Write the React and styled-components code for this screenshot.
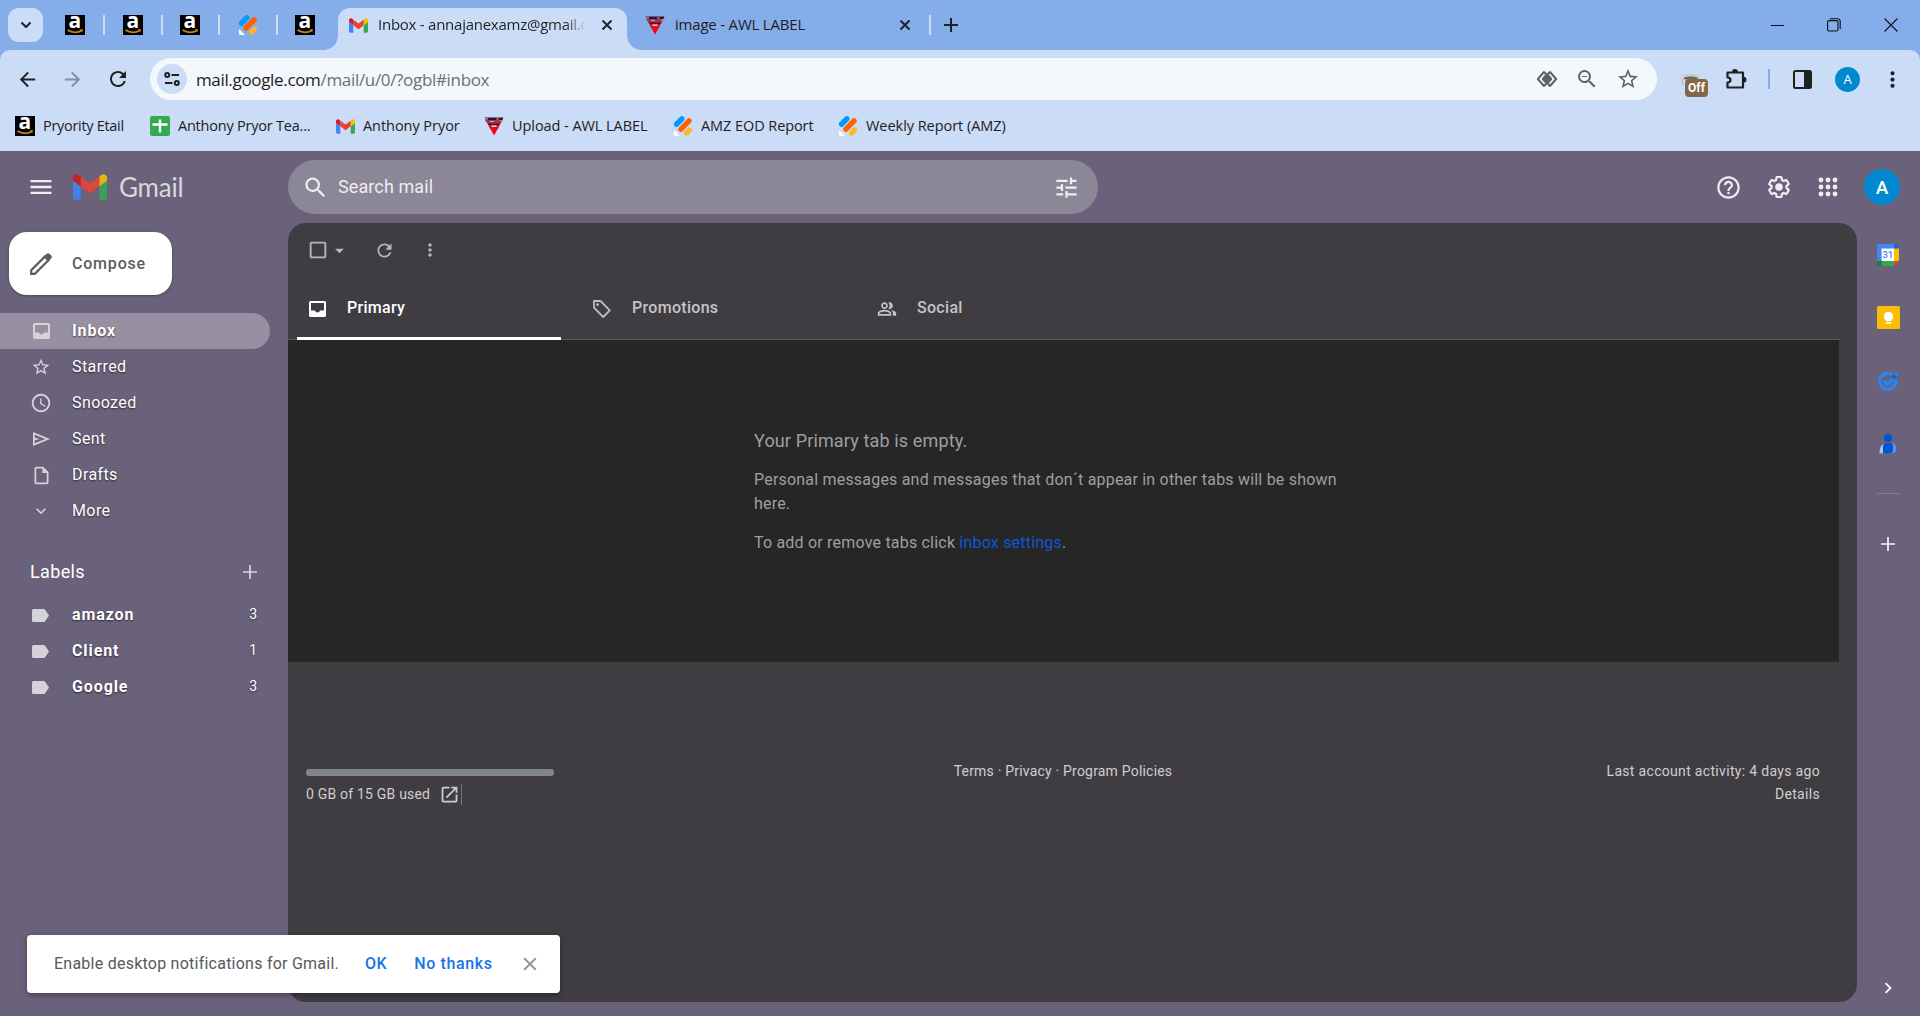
import React from "react";
import styled, { createGlobalStyle } from "styled-components";
import {
  MdAccessTime,
  MdArrowBack,
  MdArrowDropDown,
  MdArrowForward,
  MdCheckBoxOutlineBlank,
  MdChevronRight,
  MdClose,
  MdExpandMore,
  MdHelpOutline,
  MdMenu,
  MdMoreVert,
  MdOpenInNew,
  MdOutlineInsertDriveFile,
  MdOutlinePeopleAlt,
  MdOutlineZoomOut,
  MdRefresh,
  MdSearch,
  MdStarBorder,
  MdTune,
} from "react-icons/md";

const GlobalStyle = createGlobalStyle`
  * {
    box-sizing: border-box;
  }
  body {
    margin: 0;
    overflow: hidden;
    font-family: Roboto, "Liberation Sans", sans-serif;
  }
  p, h1, h2, h3 {
    margin: 0;
    font-weight: 400;
  }
  svg {
    display: block;
    flex-shrink: 0;
    overflow: visible;
  }
`;

/* ---------- logos and icons ---------- */

const AmazonIcon = () => (
  <svg width="20" height="20" viewBox="0 0 20 20">
    <rect width="20" height="20" fill="#000" />
    <text
      x="9.8"
      y="13.4"
      textAnchor="middle"
      fontFamily="Open Sans, sans-serif"
      fontWeight="700"
      fontSize="21"
      fill="#fff"
    >
      a
    </text>
    <path
      d="M2.500 15c4.500 3 10.500 3 14.500.2"
      fill="none"
      stroke="#c77f1b"
      strokeWidth="1.800"
    />
    <path d="M14.600 14.400l3.400-.4-.8 3.200z" fill="#c77f1b" />
  </svg>
);

const JotformIcon = () => (
  <svg width="20" height="20" viewBox="0 0 20 20">
    <path d="M1 14v4.600c0 .8.4 1.400 1.200 1.400H7z" fill="#fff" />
    <g strokeLinecap="round" strokeWidth="5.400" fill="none">
      <path d="M3.600 8.200l5.200-5.400" stroke="#0099ff" />
      <path d="M8 13.200l8-8.400" stroke="#ff6100" />
      <path d="M13.600 17l2.800-3" stroke="#ffb629" />
    </g>
  </svg>
);

const GmailIcon = ({ width, height, muted }) => (
  <svg
    width={width}
    height={height}
    viewBox="52 42 88 66"
    opacity={muted ? 0.9 : 1}
  >
    <path fill="#4285f4" d="M58 108h14V74L52 59v43c0 3.320 2.690 6 6 6" />
    <path fill="#34a853" d="M120 108h14c3.320 0 6-2.690 6-6V59l-20 15" />
    <path fill="#fbbc04" d="M120 48v26l20-15v-8c0-7.420-8.470-11.650-14.400-7.200" />
    <path fill="#ea4335" d="M72 74V48l24 18 24-18v26L96 92" />
    <path fill="#c5221f" d="M52 51v8l20 15V48l-5.600-4.200c-5.940-4.450-14.400-.220-14.400 7.200" />
  </svg>
);

const AwlIcon = () => (
  <svg width="20" height="20" viewBox="0 0 20 20">
    <path d="M.5 1.500h19L17.500 6h-15z" fill="#2a1238" />
    <path d="M1 4h18l-2 3H3z" fill="#8a3a6c" />
    <path d="M1 2.800h3M6 5.500h4M12 3h3M16 4.800h3" stroke="#f0a040" strokeWidth="1.200" />
    <path d="M3.200 7h13.600L14 12.500H6z" fill="#c4142c" />
    <path d="M4.200 8.300h11.600" stroke="#2a1238" strokeWidth="1" />
    <path d="M7.500 10.200h5" stroke="#fff" strokeWidth="1.200" />
    <path d="M5.500 11.500h9L10 19.500z" fill="#f5050f" />
  </svg>
);

const SheetsIcon = () => (
  <svg width="20" height="20" viewBox="0 0 20 20">
    <rect width="20" height="20" rx="2" fill="#34a853" />
    <path d="M10 3.500v13M2.500 8.500h15" stroke="#fff" strokeWidth="2.400" />
  </svg>
);

const SiteInfoIcon = () => (
  <svg width="18" height="18" viewBox="0 0 18 18">
    <g fill="none" stroke="#1f2023" strokeWidth="2">
      <circle cx="4.200" cy="5" r="2" />
      <path d="M8.500 5H16M2 13h7.500" />
      <circle cx="13.800" cy="13" r="2" />
    </g>
  </svg>
);

const DiamondsIcon = () => (
  <svg width="22" height="18" viewBox="0 0 22 18">
    <path d="M11 3.200L15.600 9 11 14.800 6.400 9z" fill="#5f6368" />
    <g fill="none" stroke="#5f6368" strokeWidth="2" strokeLinejoin="round">
      <path d="M8 2L1.800 9 8 16l2.600-2.600L6.800 9l3.800-4.600z" />
      <path d="M14 2l6.200 7L14 16l-2.600-2.600L15.200 9l-3.800-4.600z" />
    </g>
  </svg>
);

const CoffeeIcon = () => (
  <svg width="20" height="16" viewBox="0 0 20 16">
    <path d="M1.500 4l1.500 9h4l8-9z" fill="#dfe3e6" />
    <ellipse cx="10" cy="3.600" rx="9" ry="2.600" fill="#f5f5f2" stroke="#b3b5b3" />
    <ellipse cx="10.600" cy="4" rx="7.200" ry="1.700" fill="#6f6a5e" />
    <path d="M2.400 6l.8 6" stroke="#a9aca9" strokeWidth="1" />
  </svg>
);

const PuzzleIcon = () => (
  <svg width="22" height="22" viewBox="0 0 22 22">
    <path
      d="M2.500 4.500h15.500v15H2.500v-5c2-.3 3-1.300 3-2.600s-1-2.300-3-2.600z"
      fill="none"
      stroke="#1f2023"
      strokeWidth="2.200"
      strokeLinejoin="round"
    />
    <path d="M7 4a3 3 0 0 1 6 0zM18.500 8.800a3 3 0 0 1 0 6z" fill="#1f2023" />
  </svg>
);

const SidePanelIcon = () => (
  <svg width="19" height="19" viewBox="0 0 19 19">
    <rect x="1" y="1" width="17" height="17" rx="1.500" fill="none" stroke="#1f2023" strokeWidth="2" />
    <path d="M11 1h7v17h-7z" fill="#1f2023" />
  </svg>
);

const RestoreIcon = () => (
  <svg width="14" height="14" viewBox="0 0 14 14">
    <g fill="none" stroke="#0b0f18" strokeWidth="1.100">
      <rect x="0.600" y="2.600" width="10.400" height="10.400" rx="1.600" />
      <path d="M2.800.7h7.700a2.700 2.700 0 0 1 2.700 2.700v7.600" />
    </g>
  </svg>
);

const CloseWindowIcon = () => (
  <svg width="14" height="14" viewBox="0 0 14 14">
    <path d="M.5.5l13 13M13.500.5l-13 13" stroke="#0b0f18" strokeWidth="1.100" />
  </svg>
);

const CrossIcon = () => (
  <svg width="12" height="12" viewBox="0 0 12 12">
    <path d="M1.500 1.500l9 9M10.500 1.500l-9 9" stroke="#1f2023" strokeWidth="1.900" />
  </svg>
);

const PlusIcon = ({ size, stroke, color }) => (
  <svg width={size} height={size} viewBox="0 0 14 14">
    <path d="M7 0v14M0 7h14" stroke={color} strokeWidth={stroke} />
  </svg>
);

const GearIcon = () => (
  <svg width="26" height="26" viewBox="0 0 24 24" fill="#efedf1">
    <path d="M13.850 22.250h-3.700c-.74 0-1.360-.54-1.450-1.270l-.27-1.890c-.27-.14-.53-.29-.79-.46l-1.800.72c-.7.26-1.470-.03-1.810-.65L2.200 15.530c-.35-.66-.2-1.440.36-1.880l1.530-1.190c-.01-.15-.02-.3-.02-.46 0-.15.01-.31.02-.46l-1.520-1.190c-.59-.45-.74-1.260-.37-1.880l1.850-3.190c.34-.62 1.110-.9 1.790-.63l1.810.73c.26-.17.52-.32.78-.46l.27-1.910c.09-.7.71-1.250 1.440-1.250h3.700c.74 0 1.360.54 1.450 1.270l.27 1.890c.27.14.53.29.79.46l1.800-.72c.71-.26 1.480.03 1.820.65l1.840 3.180c.36.66.2 1.440-.36 1.880l-1.520 1.190c.01.15.02.3.02.46s-.01.31-.02.46l1.520 1.190c.56.45.72 1.230.37 1.860l-1.860 3.220c-.34.62-1.110.9-1.800.63l-1.800-.72c-.26.17-.52.32-.78.46l-.27 1.910c-.1.680-.720 1.220-1.460 1.220zm-3.230-2h2.760l.37-2.550.53-.22c.44-.18.88-.44 1.340-.78l.45-.34 2.380.96 1.380-2.400-2.030-1.580.07-.56c.03-.26.06-.51.06-.78s-.03-.53-.06-.78l-.07-.56 2.030-1.580-1.390-2.400-2.390.96-.45-.35c-.42-.32-.87-.58-1.330-.77l-.52-.22-.37-2.550h-2.760l-.37 2.550-.53.21c-.44.19-.88.44-1.340.79l-.45.33-2.380-.95-1.390 2.390 2.030 1.580-.07.56a7 7 0 0 0-.06.79c0 .26.02.53.06.78l.07.56-2.030 1.580 1.380 2.400 2.390-.96.45.35c.43.33.86.58 1.330.77l.53.22z" />
    <circle cx="12" cy="12" r="3.500" />
  </svg>
);

const AppsGridIcon = () => (
  <svg width="20" height="20" viewBox="0 0 20 20" fill="#efedf1">
    {[3, 10, 17].map((cy) =>
      [3, 10, 17].map((cx) => <circle key={`${cx}-${cy}`} cx={cx} cy={cy} r="2.400" />)
    )}
  </svg>
);

const PencilIcon = () => (
  <svg width="22" height="22" viewBox="0 0 22 22">
    <path
      d="M1.200 20.800v-3.600L14.800 3.600l3.600 3.600L4.800 20.800z"
      fill="none"
      stroke="#5b5d60"
      strokeWidth="2.200"
    />
    <path d="M14 3.400l2.600-2.600c.8-.8 2-.8 2.800 0l1.800 1.800c.8.8.8 2 0 2.800L18.600 8z" fill="#5b5d60" />
  </svg>
);

const TrayIcon = () => (
  <svg width="17" height="16" viewBox="0 0 17 16">
    <path
      fillRule="evenodd"
      d="M1.500 0h14A1.500 1.500 0 0 1 17 1.500v13a1.500 1.500 0 0 1-1.500 1.500h-14A1.500 1.500 0 0 1 0 14.500v-13A1.500 1.500 0 0 1 1.500 0zM2 2v7.500h4c.3 1.200 1.300 2 2.500 2s2.200-.8 2.500-2h4V2z"
      fill="currentColor"
    />
  </svg>
);

const SendIcon = () => (
  <svg width="17" height="14" viewBox="0 0 17 14">
    <path
      fillRule="evenodd"
      d="M0 0l17 7L0 14zM1.800 2.700v3L7 7l-5.200 1.300v3L12.300 7z"
      fill="currentColor"
    />
  </svg>
);

const LabelIcon = () => (
  <svg width="19" height="13" viewBox="0 0 19 13">
    <path d="M1.500 0h10q1 0 1.600.8L17 6.500l-3.900 5.700q-.6.8-1.600.8h-10Q0 13 0 11.500v-10Q0 0 1.500 0z" fill="currentColor" />
  </svg>
);

const TagIcon = () => (
  <svg width="20" height="20" viewBox="0 0 20 20">
    <path
      d="M2 2h6.500l9.300 9.300-6.600 6.700L2 8.600z"
      fill="none"
      stroke="#bdbcbe"
      strokeWidth="1.800"
      strokeLinejoin="round"
    />
    <circle cx="5.600" cy="5.600" r="1.400" fill="#bdbcbe" />
  </svg>
);

const CalendarIcon = () => (
  <svg width="22" height="22" viewBox="0 0 22 22">
    <path d="M0 1.500Q0 0 1.500 0H17v4.500H4.500V17H0z" fill="#4285f4" />
    <path d="M17 0h3.500Q22 0 22 1.500v3h-5z" fill="#1967d2" />
    <path d="M17 4.500h5V17h-5z" fill="#fbbc04" />
    <path d="M4.500 17H17v5H4.500z" fill="#34a853" />
    <path d="M0 17h4.500v5h-3Q0 22 0 20.500z" fill="#188038" />
    <path d="M17 17h5l-5 5z" fill="#ea4335" />
    <path d="M4.500 4.500H17V17H4.500z" fill="#fff" />
    <text
      x="10.800"
      y="14.300"
      textAnchor="middle"
      fontFamily="Roboto, sans-serif"
      fontWeight="500"
      fontSize="9.500"
      fill="#4285f4"
    >
      31
    </text>
  </svg>
);

const KeepIcon = () => (
  <svg width="23" height="23" viewBox="0 0 23 23">
    <rect width="23" height="23" rx="1.500" fill="#fbbc04" />
    <circle cx="11.500" cy="10.500" r="4.700" fill="#fff" />
    <path d="M8.800 12h5.400v3H8.800zM8.800 16h5.400v1.800H8.800z" fill="#fff" />
  </svg>
);

const TasksIcon = () => (
  <svg width="22" height="22" viewBox="0 0 22 22">
    <path
      d="M15.500 4.800A8 8 0 1 0 18.600 9.500"
      fill="none"
      stroke="#2684fc"
      strokeWidth="3.200"
    />
    <path d="M6.800 10.600l3.800 3.700 7.800-7.800" fill="none" stroke="#2684fc" strokeWidth="3" />
    <path d="M14.800 6.900l2.300-2.300 2.200 2.200-2.300 2.400z" fill="#0066da" />
    <circle cx="20" cy="4.200" r="1.900" fill="#2684fc" />
  </svg>
);

const ContactsIcon = () => (
  <svg width="18" height="20" viewBox="0 0 18 20">
    <path d="M5 9.500C2 11 .5 14 .5 19.300H6z" fill="#a1c2fa" />
    <path d="M12 9.500h2a4 4 0 0 1 3 4v2.500a4 4 0 0 1-3.500 3.300H11z" fill="#5a93ff" />
    <circle cx="9" cy="4" r="4" fill="#0057cc" />
    <path d="M4 12.500q0-3.500 3.500-3.500h3q3.500 0 3.500 3.500v3.300q0 3.500-3.500 3.500H4z" fill="#0057cc" />
  </svg>
);

/* ---------- data ---------- */

const pinnedTabs = [AmazonIcon, AmazonIcon, AmazonIcon, JotformIcon, AmazonIcon];

const bookmarks = [
  { icon: <AmazonIcon />, title: "Pryority Etail", width: 80, gap: 27, spacing: -0.3 },
  { icon: <SheetsIcon />, title: "Anthony Pryor Tea...", width: 132, gap: 26, spacing: -0.22 },
  { icon: <GmailIcon width={19} height={15} />, title: "Anthony Pryor", width: 96, gap: 25, spacing: -0.05 },
  { icon: <AwlIcon />, title: "Upload - AWL LABEL", width: 135, gap: 26, spacing: -0.06 },
  { icon: <JotformIcon />, title: "AMZ EOD Report", width: 112, gap: 25, spacing: -0.08 },
  { icon: <JotformIcon />, title: "Weekly Report (AMZ)", width: 140, gap: 0, spacing: -0.04 },
];

const folders = [
  { icon: <TrayIcon />, name: "Inbox", active: true },
  { icon: <MdStarBorder size={20} />, name: "Starred" },
  { icon: <MdAccessTime size={22} />, name: "Snoozed" },
  { icon: <SendIcon />, name: "Sent" },
  { icon: <MdOutlineInsertDriveFile size={21} />, name: "Drafts" },
  { icon: <MdExpandMore size={20} />, name: "More" },
];

const labels = [
  { name: "amazon", count: 3 },
  { name: "Client", count: 1 },
  { name: "Google", count: 3 },
];

const categories = [
  { icon: <TrayIcon />, name: "Primary", active: true },
  { icon: <TagIcon />, name: "Promotions" },
  { icon: <MdOutlinePeopleAlt size={20} />, name: "Social" },
];

/* ---------- browser ---------- */

const Browser = () => (
  <BrowserFrame>
    <TabStrip>
      <TabSearch>
        <svg width="12" height="8" viewBox="0 0 12 8">
          <path d="M1.500 1.500L6 6l4.500-4.500" fill="none" stroke="#1f2023" strokeWidth="2" />
        </svg>
      </TabSearch>
      <PinnedTabs>
        {pinnedTabs.map((Icon, i) => (
          <PinnedTab key={i} $last={i === pinnedTabs.length - 1}>
            <Icon />
          </PinnedTab>
        ))}
      </PinnedTabs>
      <ActiveTab>
        <GmailIcon width={19} height={15} />
        <ActiveTitle>Inbox - annajanexamz@gmail.c</ActiveTitle>
        <CrossIcon />
      </ActiveTab>
      <Tab>
        <AwlIcon />
        <TabTitle>image - AWL LABEL</TabTitle>
        <CrossIcon />
      </Tab>
      <NewTab>
        <PlusIcon size={14} stroke={2} color="#1f2023" />
      </NewTab>
      <WindowControls>
        <MinimizeBar />
        <RestoreIcon />
        <CloseWindowIcon />
      </WindowControls>
    </TabStrip>
    <Toolbar>
      <NavButtons>
        <MdArrowBack size={23} />
        <FadedIcon>
          <MdArrowForward size={23} />
        </FadedIcon>
        <MdRefresh size={24} />
      </NavButtons>
      <Omnibox>
        <SiteInfo>
          <SiteInfoIcon />
        </SiteInfo>
        <Url>
          mail.google.com<UrlPath>/mail/u/0/?ogbl#inbox</UrlPath>
        </Url>
        <OmniboxIcons>
          <DiamondsIcon />
          <MdOutlineZoomOut size={24} />
          <MdStarBorder size={24} />
        </OmniboxIcons>
      </Omnibox>
      <Extension>
        <CoffeeIcon />
        <OffBadge>Off</OffBadge>
      </Extension>
      <PuzzleIcon />
      <ToolbarDivider />
      <SidePanelIcon />
      <ProfileDot>A</ProfileDot>
      <MdMoreVert size={25} />
    </Toolbar>
    <BookmarkBar>
      {bookmarks.map((item) => (
        <Bookmark key={item.title} $gap={item.gap}>
          {item.icon}
          <BookmarkTitle $width={item.width} $spacing={item.spacing}>
            {item.title}
          </BookmarkTitle>
        </Bookmark>
      ))}
    </BookmarkBar>
  </BrowserFrame>
);

/* ---------- gmail ---------- */

const Header = () => (
  <HeaderBar>
    <Brand>
      <MdMenu size={28} />
      <GmailIcon width={34} height={26} muted />
      <Wordmark>Gmail</Wordmark>
    </Brand>
    <SearchBox>
      <MdSearch size={27} />
      <SearchText>Search mail</SearchText>
      <MdTune size={27} />
    </SearchBox>
    <HeaderActions>
      <MdHelpOutline size={27} />
      <GearIcon />
      <AppsGridIcon />
      <Avatar>A</Avatar>
    </HeaderActions>
  </HeaderBar>
);

const Sidebar = () => (
  <SidebarColumn>
    <Compose>
      <PencilIcon />
      Compose
    </Compose>
    {folders.map((folder) => (
      <NavRow key={folder.name} $active={folder.active}>
        <NavIcon>{folder.icon}</NavIcon>
        <NavName $bold={folder.active}>{folder.name}</NavName>
      </NavRow>
    ))}
    <LabelsHeading>
      Labels
      <PlusIcon size={14} stroke={1.7} color="#d9d6dd" />
    </LabelsHeading>
    {labels.map((label) => (
      <NavRow key={label.name}>
        <NavIcon>
          <LabelIcon />
        </NavIcon>
        <NavName $bold>{label.name}</NavName>
        <NavCount>{label.count}</NavCount>
      </NavRow>
    ))}
  </SidebarColumn>
);

const MailPanel = () => (
  <Panel>
    <MailToolbar>
      <MdCheckBoxOutlineBlank size={22} />
      <MdArrowDropDown size={21} />
      <RefreshSlot>
        <MdRefresh size={21} />
      </RefreshSlot>
      <MdMoreVert size={20} />
    </MailToolbar>
    <Categories>
      {categories.map((category) => (
        <Category key={category.name} $active={category.active}>
          <CategoryIcon>{category.icon}</CategoryIcon>
          {category.name}
        </Category>
      ))}
    </Categories>
    <EmptyState>
      <EmptyMessage>
        <EmptyTitle>Your Primary tab is empty.</EmptyTitle>
        <EmptyText>
          Personal messages and messages that don´t appear in other tabs will be
          shown
          <br />
          here.
        </EmptyText>
        <EmptyText>
          To add or remove tabs click <SettingsLink>inbox settings</SettingsLink>.
        </EmptyText>
      </EmptyMessage>
    </EmptyState>
    <Footer>
      <Storage>
        <StorageBar />
        <StorageText>
          0 GB of 15 GB used
          <OpenStorage>
            <MdOpenInNew size={21} />
          </OpenStorage>
        </StorageText>
      </Storage>
      <Policies>Terms · Privacy · Program Policies</Policies>
      <Activity>
        <p>Last account activity: 4 days ago</p>
        <p>Details</p>
      </Activity>
    </Footer>
  </Panel>
);

const SideApps = () => (
  <AppsColumn>
    <AppSlot>
      <CalendarIcon />
    </AppSlot>
    <AppSlot>
      <KeepIcon />
    </AppSlot>
    <AppSlot>
      <TasksIcon />
    </AppSlot>
    <AppSlot>
      <ContactsIcon />
    </AppSlot>
    <AppsDivider />
    <PlusIcon size={14} stroke={1.700} color="#f4f2f6" />
    <Collapse>
      <MdChevronRight size={22} />
    </Collapse>
  </AppsColumn>
);

const App = () => (
  <Screen>
    <GlobalStyle />
    <Browser />
    <Mail>
      <Header />
      <Body>
        <Sidebar />
        <MailPanel />
        <SideApps />
      </Body>
    </Mail>
    <Snackbar>
      <SnackText>Enable desktop notifications for Gmail.</SnackText>
      <SnackAction>OK</SnackAction>
      <SnackAction>No thanks</SnackAction>
      <MdClose size={22} />
    </Snackbar>
  </Screen>
);

const Screen = styled.div`
  width: 1920px;
  height: 1016px;
  position: relative;
  display: flex;
  flex-direction: column;
  overflow: hidden;
  white-space: nowrap;
`;

const BrowserFrame = styled.div`
  height: 151px;
  background: #85ade9;
  font-family: "Open Sans", "Noto Sans", sans-serif;
  color: #1f2023;
`;

const TabStrip = styled.div`
  height: 50px;
  padding-top: 8px;
  display: flex;
  padding-left: 8px;
`;

const TabSearch = styled.div`
  width: 35px;
  height: 34px;
  border-radius: 11px;
  background: #cbdcf6;
  display: flex;
  align-items: center;
  justify-content: center;
`;

const PinnedTabs = styled.div`
  display: flex;
  width: 295px;
  padding-left: 22px;
  height: 34px;
  align-items: center;
`;

const PinnedTab = styled.div`
  width: 57.5px;
  flex-shrink: 0;
  height: 20px;
  display: flex;
  align-items: center;
  &::after {
    content: "";
    width: ${({ $last }) => ($last ? 0 : "2px")};
    height: 20px;
    margin-left: 18px;
    background: #cbdcf6;
  }
`;

const ActiveTab = styled.div`
  width: 289px;
  height: 42px;
  padding: 0 14px 8px 11px;
  border-radius: 12px 12px 0 0;
  background: #cbdcf6;
  display: flex;
  align-items: center;
  position: relative;
  &::before,
  &::after {
    content: "";
    position: absolute;
    bottom: 0;
    width: 14px;
    height: 14px;
  }
  &::before {
    left: -14px;
    background: radial-gradient(circle at 0 0, transparent 13.5px, #cbdcf6 14px);
  }
  &::after {
    right: -14px;
    background: radial-gradient(circle at 100% 0, transparent 13.5px, #cbdcf6 14px);
  }
`;

const ActiveTitle = styled.span`
  width: 208px;
  margin: 0 auto 0 10px;
  padding-bottom: 2px;
  font-size: 15px;
  letter-spacing: -0.25px;
  mask-image: linear-gradient(90deg, #000 90%, transparent);
`;

const Tab = styled.div`
  width: 304px;
  height: 34px;
  padding: 0 20px 0 18px;
  display: flex;
  align-items: center;
  position: relative;
  &::after {
    content: "";
    position: absolute;
    right: 0;
    width: 2px;
    height: 20px;
    background: #cbdcf6;
  }
`;

const TabTitle = styled.span`
  margin: 0 auto 0 10px;
  padding-bottom: 2px;
  font-size: 15px;
  letter-spacing: -0.2px;
`;

const NewTab = styled.div`
  height: 34px;
  padding-left: 13px;
  display: flex;
  align-items: center;
`;

const WindowControls = styled.div`
  margin-left: auto;
  height: 34px;
  padding-right: 22px;
  display: flex;
  align-items: center;
  gap: 43px;
`;

const MinimizeBar = styled.div`
  width: 13px;
  height: 1px;
  background: #0b0f18;
`;

const Toolbar = styled.div`
  height: 51px;
  padding: 7px 15px 0 16px;
  border-radius: 10px 10px 0 0;
  background: #cbdcf6;
  display: flex;
  align-items: center;
`;

const NavButtons = styled.div`
  width: 134px;
  display: flex;
  align-items: center;
  gap: 22px;
`;

const FadedIcon = styled.div`
  color: #8390a8;
`;

const Omnibox = styled.div`
  width: 1508px;
  height: 42px;
  padding: 0 17px 0 7px;
  border-radius: 21px;
  background: #f4f8fd;
  display: flex;
  align-items: center;
`;

const SiteInfo = styled.div`
  width: 30px;
  height: 30px;
  border-radius: 50%;
  background: #cbdcf6;
  display: flex;
  align-items: center;
  justify-content: center;
`;

const Url = styled.span`
  margin-left: 9px;
  font-size: 17px;
  letter-spacing: -0.33px;
`;

const UrlPath = styled.span`
  color: #6b6f76;
`;

const OmniboxIcons = styled.div`
  margin-left: auto;
  display: flex;
  align-items: center;
  gap: 17px;
  color: #5f6368;
`;

const Extension = styled.div`
  width: 28px;
  height: 22px;
  margin: 0 17px 0 23px;
  padding-top: 6px;
  position: relative;
`;

const OffBadge = styled.div`
  position: absolute;
  left: 5px;
  top: 11px;
  width: 23px;
  height: 18px;
  border-radius: 4px;
  background: #84664a;
  color: #fff;
  font-family: Roboto, sans-serif;
  font-size: 12px;
  font-weight: 700;
  line-height: 19px;
  text-align: center;
`;

const ToolbarDivider = styled.div`
  width: 2px;
  height: 20px;
  margin: 0 23px 0 21px;
  background: #85ade9;
`;

const ProfileDot = styled.div`
  width: 25px;
  height: 25px;
  margin: 0 20px 0 23px;
  border-radius: 50%;
  background: #0288d1;
  color: #fff;
  font-size: 13px;
  line-height: 25px;
  text-align: center;
`;

const BookmarkBar = styled.div`
  height: 50px;
  padding-left: 15px;
  background: #cbdcf6;
  display: flex;
  align-items: center;
`;

const Bookmark = styled.div`
  display: flex;
  align-items: center;
  gap: 8px;
  margin-right: ${({ $gap }) => $gap}px;
`;

const BookmarkTitle = styled.span`
  width: ${({ $width }) => $width}px;
  padding-bottom: 2px;
  font-size: 14.5px;
  letter-spacing: ${({ $spacing }) => $spacing}px;
`;

const Mail = styled.div`
  flex: 1;
  display: flex;
  flex-direction: column;
  background: #6a627a;
`;

const HeaderBar = styled.div`
  height: 72px;
  display: flex;
  align-items: center;
  color: #efedf1;
`;

const Brand = styled.div`
  width: 288px;
  padding-left: 27px;
  display: flex;
  align-items: center;
  svg + svg {
    margin: 0 12px 0 18px;
  }
`;

const Wordmark = styled.h1`
  font-family: Lato, sans-serif;
  font-size: 26px;
  line-height: 30px;
  letter-spacing: -0.2px;
  color: #dad7de;
`;

const SearchBox = styled.div`
  width: 810px;
  height: 54px;
  padding: 0 18px 0 14px;
  border-radius: 27px;
  background: #8c8797;
  display: flex;
  align-items: center;
`;

const SearchText = styled.span`
  margin: 0 auto 0 9px;
  padding-bottom: 2px;
  font-size: 18px;
  letter-spacing: 0.1px;
`;

const HeaderActions = styled.div`
  margin-left: auto;
  padding-right: 20px;
  display: flex;
  align-items: center;
  svg {
    margin-right: 24px;
  }
  svg:nth-child(2) {
    margin-right: 26px;
  }
  svg:nth-child(3) {
    margin-right: 26px;
  }
`;

const Avatar = styled.div`
  width: 36px;
  height: 36px;
  border-radius: 50%;
  background: #0288d1;
  color: #fff;
  font-size: 19px;
  font-weight: 500;
  line-height: 38px;
  text-align: center;
`;

const Body = styled.div`
  flex: 1;
  display: flex;
`;

const SidebarColumn = styled.div`
  width: 288px;
  padding-top: 9px;
  color: #fff;
`;

const Compose = styled.div`
  width: 163px;
  height: 63px;
  margin: 0 0 18px 9px;
  padding-left: 21px;
  border-radius: 18px;
  background: #fff;
  box-shadow: 0 1px 3px rgba(0, 0, 0, 0.3);
  display: flex;
  align-items: center;
  gap: 20px;
  color: #5b5d60;
  font-size: 16px;
  font-weight: 500;
  letter-spacing: 0.8px;
`;

const NavRow = styled.div`
  width: 270px;
  height: 36px;
  padding: 0 13px 0 30px;
  border-radius: 0 18px 18px 0;
  background: ${({ $active }) => ($active ? "#9890a2" : "transparent")};
  display: flex;
  align-items: center;
`;

const NavIcon = styled.div`
  width: 22px;
  margin-right: 20px;
  display: flex;
  justify-content: center;
  color: #d5d2d9;
`;

const NavName = styled.span`
  margin-right: auto;
  padding-bottom: 2px;
  font-size: 16px;
  font-weight: ${({ $bold }) => ($bold ? 700 : 400)};
  letter-spacing: ${({ $bold }) => ($bold ? "0.9px" : "0.4px")};
  text-shadow: 0 1px 2px rgba(0, 0, 0, 0.6);
`;

const NavCount = styled.span`
  padding-bottom: 2px;
  font-size: 14px;
  text-shadow: 0 1px 2px rgba(0, 0, 0, 0.5);
`;

const LabelsHeading = styled.h2`
  width: 257px;
  height: 68px;
  padding: 17px 0 0 30px;
  display: flex;
  align-items: center;
  justify-content: space-between;
  font-size: 18px;
  letter-spacing: 0.35px;
`;

const Panel = styled.div`
  width: 1569px;
  height: 779px;
  border-radius: 18px;
  background: #3f3d42;
`;

const MailToolbar = styled.div`
  height: 54px;
  padding-left: 19px;
  display: flex;
  align-items: center;
  color: #b9b8ba;
`;

const RefreshSlot = styled.div`
  margin: 0 25px 0 24px;
`;

const Categories = styled.div`
  width: 1551px;
  height: 63px;
  padding-left: 9px;
  border-bottom: 1px solid #5a585c;
  display: flex;
`;

const Category = styled.div`
  width: 264px;
  height: 63px;
  margin-right: 21px;
  padding-left: 9px;
  border-bottom: 3px solid ${({ $active }) => ($active ? "#fff" : "transparent")};
  display: flex;
  align-items: center;
  color: ${({ $active }) => ($active ? "#fff" : "#c5c4c6")};
  font-size: 16px;
  font-weight: 500;
  letter-spacing: 0.3px;
`;

const CategoryIcon = styled.div`
  width: 22px;
  margin: 3px 19px 0 0;
  display: flex;
  justify-content: center;
`;

const EmptyState = styled.div`
  width: 1551px;
  height: 322px;
  background: #262626;
`;

const EmptyMessage = styled.div`
  padding: 87px 0 0 466px;
  color: #9f9f9f;
`;

const EmptyTitle = styled.h3`
  font-size: 18px;
  line-height: 28px;
  margin-bottom: 13px;
  letter-spacing: 0.14px;
`;

const EmptyText = styled.p`
  font-size: 16px;
  line-height: 24px;
  margin-bottom: 15px;
  letter-spacing: 0.2px;
`;

const SettingsLink = styled.span`
  color: #0f56d9;
`;

const Footer = styled.div`
  width: 1532px;
  padding: 98px 0 0 18px;
  display: grid;
  grid-template-columns: 1fr 1fr 1fr;
  color: #cfcecf;
  font-size: 14px;
  line-height: 23px;
  letter-spacing: 0.2px;
`;

const Storage = styled.div`
  padding-top: 9px;
`;

const StorageBar = styled.div`
  width: 248px;
  height: 7px;
  border-radius: 3px;
  background: #80868b;
`;

const StorageText = styled.div`
  margin-top: 7px;
  display: flex;
  align-items: center;
  gap: 9px;
`;

const OpenStorage = styled.div`
  padding-right: 1px;
  border-right: 1px solid #77757a;
`;

const Policies = styled.p`
  text-align: center;
`;

const Activity = styled.div`
  text-align: right;
  letter-spacing: 0.32px;
`;

const AppsColumn = styled.div`
  flex: 1;
  padding-right: 1px;
  display: flex;
  flex-direction: column;
  align-items: center;
`;

const AppSlot = styled.div`
  height: 63px;
  display: flex;
  align-items: center;
`;

const AppsDivider = styled.div`
  width: 23px;
  height: 1px;
  margin: 18px 0 43px;
  background: #857e92;
`;

const Collapse = styled.div`
  margin-top: auto;
  margin-bottom: 17px;
  color: #fff;
`;

const Snackbar = styled.div`
  position: absolute;
  left: 27px;
  top: 935px;
  width: 533px;
  height: 58px;
  padding-left: 27px;
  border-radius: 4px;
  background: #fff;
  box-shadow: 0 2px 6px rgba(0, 0, 0, 0.35);
  display: flex;
  align-items: center;
  color: #8f9296;
  font-size: 16px;
`;

const SnackText = styled.span`
  width: 311px;
  padding-bottom: 2px;
  letter-spacing: 0.24px;
  color: #55585d;
`;

const SnackAction = styled.span`
  margin-right: 27px;
  padding-bottom: 2px;
  color: #1a73e8;
  font-weight: 500;
  letter-spacing: 0.6px;
`;

export default App;
